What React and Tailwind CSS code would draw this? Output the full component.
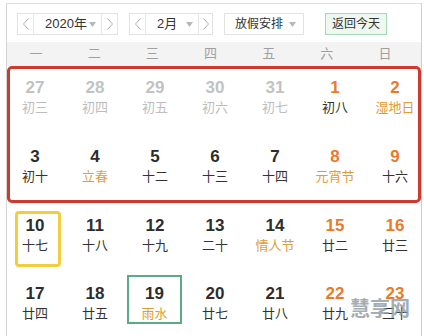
import React from 'react';

const rows = [
  [
    { d: 27, l: '初三', g: true },
    { d: 28, l: '初四', g: true },
    { d: 29, l: '初五', g: true },
    { d: 30, l: '初六', g: true },
    { d: 31, l: '初七', g: true },
    { d: 1, l: '初八', w: true },
    { d: 2, l: '湿地日', w: true, f: true },
  ],
  [
    { d: 3, l: '初十' },
    { d: 4, l: '立春', f: true },
    { d: 5, l: '十二' },
    { d: 6, l: '十三' },
    { d: 7, l: '十四' },
    { d: 8, l: '元宵节', w: true, f: true },
    { d: 9, l: '十六', w: true },
  ],
  [
    { d: 10, l: '十七', today: true },
    { d: 11, l: '十八' },
    { d: 12, l: '十九' },
    { d: 13, l: '二十' },
    { d: 14, l: '情人节', f: true },
    { d: 15, l: '廿二', w: true },
    { d: 16, l: '廿三', w: true },
  ],
  [
    { d: 17, l: '廿四' },
    { d: 18, l: '廿五' },
    { d: 19, l: '雨水', f: true, sel: true },
    { d: 20, l: '廿七' },
    { d: 21, l: '廿八' },
    { d: 22, l: '廿九', w: true },
    { d: 23, l: '三十', w: true },
  ],
];

const weekdays = ['一', '二', '三', '四', '五', '六', '日'];

const Chevron = ({ dir }) => (
  <svg width="6" height="12" viewBox="0 0 6 12" fill="none">
    <polyline
      points={dir === 'left' ? '5.5,0.5 0.5,6 5.5,11.5' : '0.5,0.5 5.5,6 0.5,11.5'}
      stroke="#b0b0b0"
      strokeWidth="1"
    />
  </svg>
);

const Caret = () => (
  <svg width="7" height="5" viewBox="0 0 7 5">
    <polygon points="0,0 7,0 3.5,5" fill="#b8b8b8" />
  </svg>
);

const Stepper = ({ label, width, textWidth }) => (
  <div className={`flex h-[22px] border border-[#e2e2e2] bg-white ${width}`}>
    <div className="flex w-[16px] items-center justify-center border-r border-[#e6e6e6]">
      <Chevron dir="left" />
    </div>
    <div className={`flex items-center justify-between border-r border-[#e6e6e6] pl-[11px] pr-[5px] ${textWidth}`}>
      <span className="whitespace-nowrap text-[13px] leading-[20px] text-[#333]">{label}</span>
      <Caret />
    </div>
    <div className="flex flex-1 items-center justify-center">
      <Chevron dir="right" />
    </div>
  </div>
);

const Cell = ({ c }) => {
  const num = c.g ? 'text-[#c2c2c2]' : c.w ? 'text-[#e97a2c]' : 'text-[#2d2d2d]';
  const lun = c.g ? 'text-[#bdbdbd]' : c.f ? 'text-[#e09c36]' : 'text-[#333]';
  const inner = (
    <>
      <div className={`text-[17px] font-bold leading-[20px] ${num}`}>{c.d}</div>
      <div className={`whitespace-nowrap text-[13px] leading-[20px] ${lun}`}>{c.l}</div>
    </>
  );

  if (c.today) {
    return (
      <div className="h-[62px]">
        <div className="ml-[10px] mt-[4px] h-[56px] w-[46px] rounded-[4px] border-[3px] border-[#f2cd3c] pr-[6px] pt-[2px] text-center">
          {inner}
        </div>
      </div>
    );
  }
  if (c.sel) {
    return (
      <div className="h-[62px]">
        <div className="ml-[2px] h-[49px] w-[55px] border-2 border-[#5aab84] pt-[7px] text-center">
          {inner}
        </div>
      </div>
    );
  }
  return <div className="h-[62px] pt-[9px] text-center">{inner}</div>;
};

const Row = ({ cells }) => (
  <div className="grid w-[420px] grid-cols-7">
    {cells.map((c) => (
      <Cell key={c.d} c={c} />
    ))}
  </div>
);

export default function App() {
  return (
    <div className="relative h-[336px] w-[424px] overflow-hidden bg-white font-['Liberation_Sans','Noto_Sans_CJK_SC',sans-serif]">
      <div className="ml-[6px] mt-[3px] h-[340px] w-[416px] border-l border-r border-t border-l-[#d4d4d4] border-r-[#b4dcc4] border-t-[#e0e0e0]">

        {/* toolbar */}
        <div className="flex h-[38px] items-start pl-[10px] pt-[9px]">
          <Stepper label="2020年" width="w-[101px]" textWidth="w-[68px]" />
          <div className="ml-[11px]">
            <Stepper label="2月" width="w-[84px]" textWidth="w-[53px]" />
          </div>
          <div className="ml-[11px] flex h-[22px] w-[80px] items-center justify-between border border-[#e2e2e2] pl-[10px] pr-[7px]">
            <span className="whitespace-nowrap text-[12px] leading-[20px] text-[#333]">放假安排</span>
            <Caret />
          </div>
          <div className="ml-[21px] flex h-[22px] w-[62px] items-center justify-center border border-[#a9d6b8] bg-[#edf8f0]">
            <span className="whitespace-nowrap text-[12px] leading-[20px] text-[#333]">返回今天</span>
          </div>
        </div>

        {/* weekday header */}
        <div className="h-[24px] bg-[#f3f3f3]">
          <div className="grid w-[407px] grid-cols-7">
            {weekdays.map((w) => (
              <div key={w} className="text-center text-[13px] leading-[24px] text-[#a0a0a0]">
                {w}
              </div>
            ))}
          </div>
        </div>

        {/* highlighted weeks */}
        <div className="w-[414px] rounded-[5px] border-[3px] border-[#cf3a2f]">
          <div className="-ml-[5px] flex flex-col gap-[7px]">
            <Row cells={rows[0]} />
            <Row cells={rows[1]} />
          </div>
        </div>

        <div className="-ml-[2px] mt-[4px] flex flex-col gap-[6px]">
          <Row cells={rows[2]} />
          <Row cells={rows[3]} />
        </div>
      </div>

      {/* watermark */}
      <div className="absolute left-[350px] top-[297px] text-[20px] font-bold leading-[24px] text-[#8e98a2] opacity-80">
        慧享网
      </div>
    </div>
  );
}
